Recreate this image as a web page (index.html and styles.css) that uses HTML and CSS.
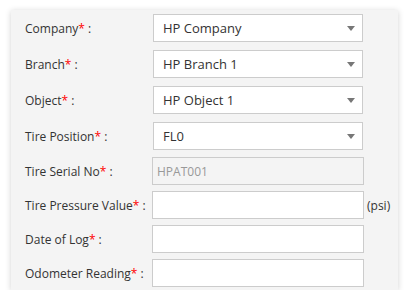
FILE: index.html
```html
<!DOCTYPE html>
<html lang="en">
<head>
<meta charset="UTF-8" />
<title>Tire Pressure Log</title>
<link rel="stylesheet" href="styles.css">
</head>
<body>

<div class="panel">
  <div class="row sel">
    <label class="lbl">Company<span class="req">*</span> :</label>
    <div class="select"><span>HP Company</span><i class="caret"></i></div>
  </div>
  <div class="row sel">
    <label class="lbl">Branch<span class="req">*</span> :</label>
    <div class="select"><span>HP Branch 1</span><i class="caret"></i></div>
  </div>
  <div class="row sel">
    <label class="lbl">Object<span class="req">*</span> :</label>
    <div class="select"><span>HP Object 1</span><i class="caret"></i></div>
  </div>
  <div class="row sel last-sel">
    <label class="lbl">Tire Position<span class="req">*</span> :</label>
    <div class="select"><span>FL0</span><i class="caret"></i></div>
  </div>
  <div class="row">
    <label class="lbl">Tire Serial No<span class="req">*</span> :</label>
    <div class="input disabled">HPAT001</div>
  </div>
  <div class="row">
    <label class="lbl">Tire Pressure Value<span class="req">*</span> :</label>
    <div class="input"></div>
    <span class="unit">(psi)</span>
  </div>
  <div class="row">
    <label class="lbl">Date of Log<span class="req">*</span> :</label>
    <div class="input"></div>
  </div>
  <div class="row">
    <label class="lbl">Odometer Reading<span class="req">*</span> :</label>
    <div class="input"></div>
  </div>
</div>

</body>
</html>
```

FILE: styles.css
```css
body {
  margin: 0;
  padding: 10px 0 0 11px;
  background: #fff;
  font-family: 'Open Sans', 'Liberation Sans', sans-serif;
  font-size: 13px;
  color: #333;
}
.panel {
  width: 373px;
  height: 276px;
  padding: 4px 0 0 14px;
  background: #f4f4f4;
  box-shadow: 0 1px 6px rgba(0,0,0,0.18);
}
.row {
  display: flex;
  align-items: center;
  height: 28px;
  margin-bottom: 6px;
}
.row.sel {
  margin-bottom: 8px;
}
.row.last-sel {
  margin-bottom: 7px;
}
.lbl {
  width: 127px;
  flex: none;
  font-size: 12px;
  white-space: nowrap;
}
.req {
  color: #f00;
}
/* dropdowns */
.select {
  height: 26px;
  margin-left: 1px;
  border: 1px solid #ccc;
  background: #fff;
  display: flex;
  align-items: center;
  justify-content: space-between;
  padding: 0 7px 0 9px;
  box-sizing: content-box;
  width: 192px;
}
.caret {
  width: 0;
  height: 0;
  border-left: 4px solid transparent;
  border-right: 4px solid transparent;
  border-top: 5px solid #777;
}
/* text fields */
.input {
  width: 210px;
  height: 26px;
  border: 1px solid #ccc;
  background: #fff;
  display: flex;
  align-items: center;
  box-sizing: content-box;
}
.input.disabled {
  background: #f4f4f4;
  color: #999;
  font-size: 12px;
  padding-left: 4px;
  width: 206px;
}
.unit {
  margin-left: 3px;
  font-size: 12px;
}
```
